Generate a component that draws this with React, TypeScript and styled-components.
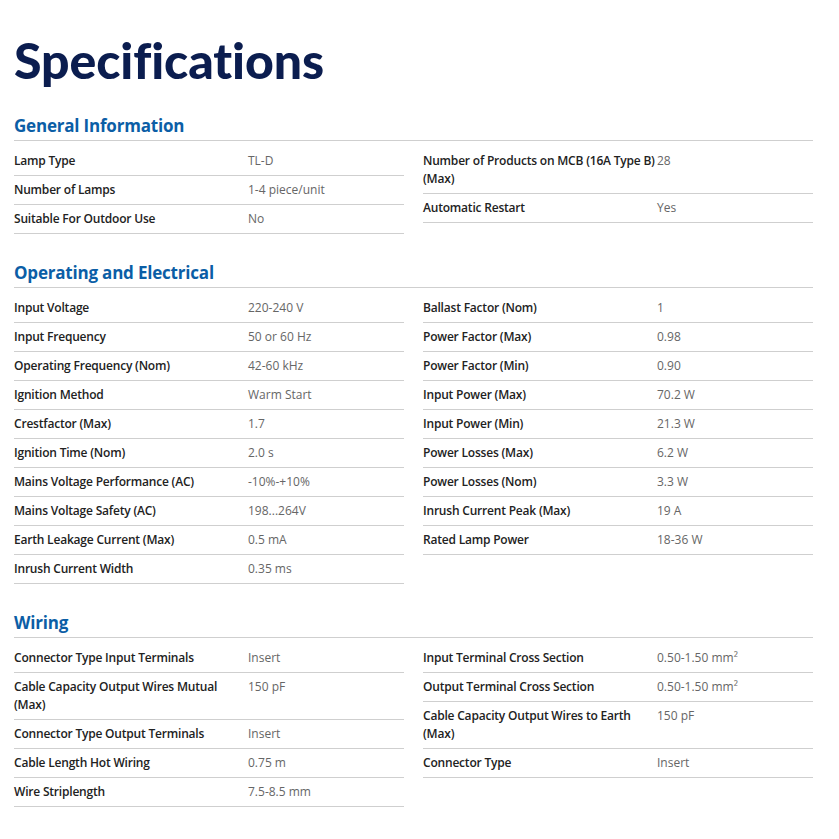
import { FC } from "react"
import styled, { createGlobalStyle } from "styled-components"

const GlobalStyle = createGlobalStyle`
  body {
    margin: 0;
    background: #fff;
    font-family: "Open Sans", "Liberation Sans", sans-serif;
  }
`

const navy = "#0b1d4f"
const blue = "#0b5ea6"
const lineGrey = "#cfcfcf"

type Spec = [string, string]

interface Section {
  title: string;
  left: Spec[];
  right: Spec[];
}

const sections: Section[] = [
  {
    title: "General Information",
    left: [
      ["Lamp Type", "TL-D"],
      ["Number of Lamps", "1-4 piece/unit"],
      ["Suitable For Outdoor Use", "No"],
    ],
    right: [
      ["Number of Products on MCB (16A Type B) (Max)", "28"],
      ["Automatic Restart", "Yes"],
    ],
  },
  {
    title: "Operating and Electrical",
    left: [
      ["Input Voltage", "220-240 V"],
      ["Input Frequency", "50 or 60 Hz"],
      ["Operating Frequency (Nom)", "42-60 kHz"],
      ["Ignition Method", "Warm Start"],
      ["Crestfactor (Max)", "1.7"],
      ["Ignition Time (Nom)", "2.0 s"],
      ["Mains Voltage Performance (AC)", "-10%-+10%"],
      ["Mains Voltage Safety (AC)", "198...264V"],
      ["Earth Leakage Current (Max)", "0.5 mA"],
      ["Inrush Current Width", "0.35 ms"],
    ],
    right: [
      ["Ballast Factor (Nom)", "1"],
      ["Power Factor (Max)", "0.98"],
      ["Power Factor (Min)", "0.90"],
      ["Input Power (Max)", "70.2 W"],
      ["Input Power (Min)", "21.3 W"],
      ["Power Losses (Max)", "6.2 W"],
      ["Power Losses (Nom)", "3.3 W"],
      ["Inrush Current Peak (Max)", "19 A"],
      ["Rated Lamp Power", "18-36 W"],
    ],
  },
  {
    title: "Wiring",
    left: [
      ["Connector Type Input Terminals", "Insert"],
      ["Cable Capacity Output Wires Mutual (Max)", "150 pF"],
      ["Connector Type Output Terminals", "Insert"],
      ["Cable Length Hot Wiring", "0.75 m"],
      ["Wire Striplength", "7.5-8.5 mm"],
    ],
    right: [
      ["Input Terminal Cross Section", "0.50-1.50 mm²"],
      ["Output Terminal Cross Section", "0.50-1.50 mm²"],
      ["Cable Capacity Output Wires to Earth (Max)", "150 pF"],
      ["Connector Type", "Insert"],
    ],
  },
]

const Page = styled.div`
  width: 799px;
  padding: 29px 0 20px 14px;
`

const Title = styled.h1`
  margin: 0 0 24px;
  font-family: "Lato", "Open Sans", sans-serif;
  font-weight: 900;
  font-size: 50px;
  line-height: 62px;
  letter-spacing: -0.1px;
  color: ${navy};
`

const SectionBlock = styled.section`
  & + & {
    margin-top: 28px;
  }
`

const SectionTitle = styled.h2`
  margin: 0 0 6px;
  padding-bottom: 3px;
  border-bottom: 1px solid ${lineGrey};
  font-size: 17px;
  line-height: 22px;
  font-weight: 700;
  letter-spacing: -0.2px;
  color: ${blue};
`

const Columns = styled.div`
  display: grid;
  grid-template-columns: 390px 390px;
  column-gap: 19px;
  align-items: start;
`

const Row = styled.div`
  display: grid;
  grid-template-columns: 234px 1fr;
  padding: 5px 0;
  border-bottom: 1px solid ${lineGrey};
  font-size: 12px;
  line-height: 18px;
`

const Label = styled.div`
  font-weight: 600;
  color: #222;
  letter-spacing: -0.2px;
`

const Value = styled.div`
  font-weight: 400;
  color: #666;
`

const SpecColumn: FC<{ specs: Spec[] }> = ({ specs }) => (
  <div>
    {specs.map(([label, value]) => (
      <Row key={label}>
        <Label>{label}</Label>
        <Value>{value}</Value>
      </Row>
    ))}
  </div>
)

const App: FC = () => {
  return (
    <Page>
      <GlobalStyle />
      <Title>Specifications</Title>
      {sections.map(section => (
        <SectionBlock key={section.title}>
          <SectionTitle>{section.title}</SectionTitle>
          <Columns>
            <SpecColumn specs={section.left} />
            <SpecColumn specs={section.right} />
          </Columns>
        </SectionBlock>
      ))}
    </Page>
  )
}

export default App
